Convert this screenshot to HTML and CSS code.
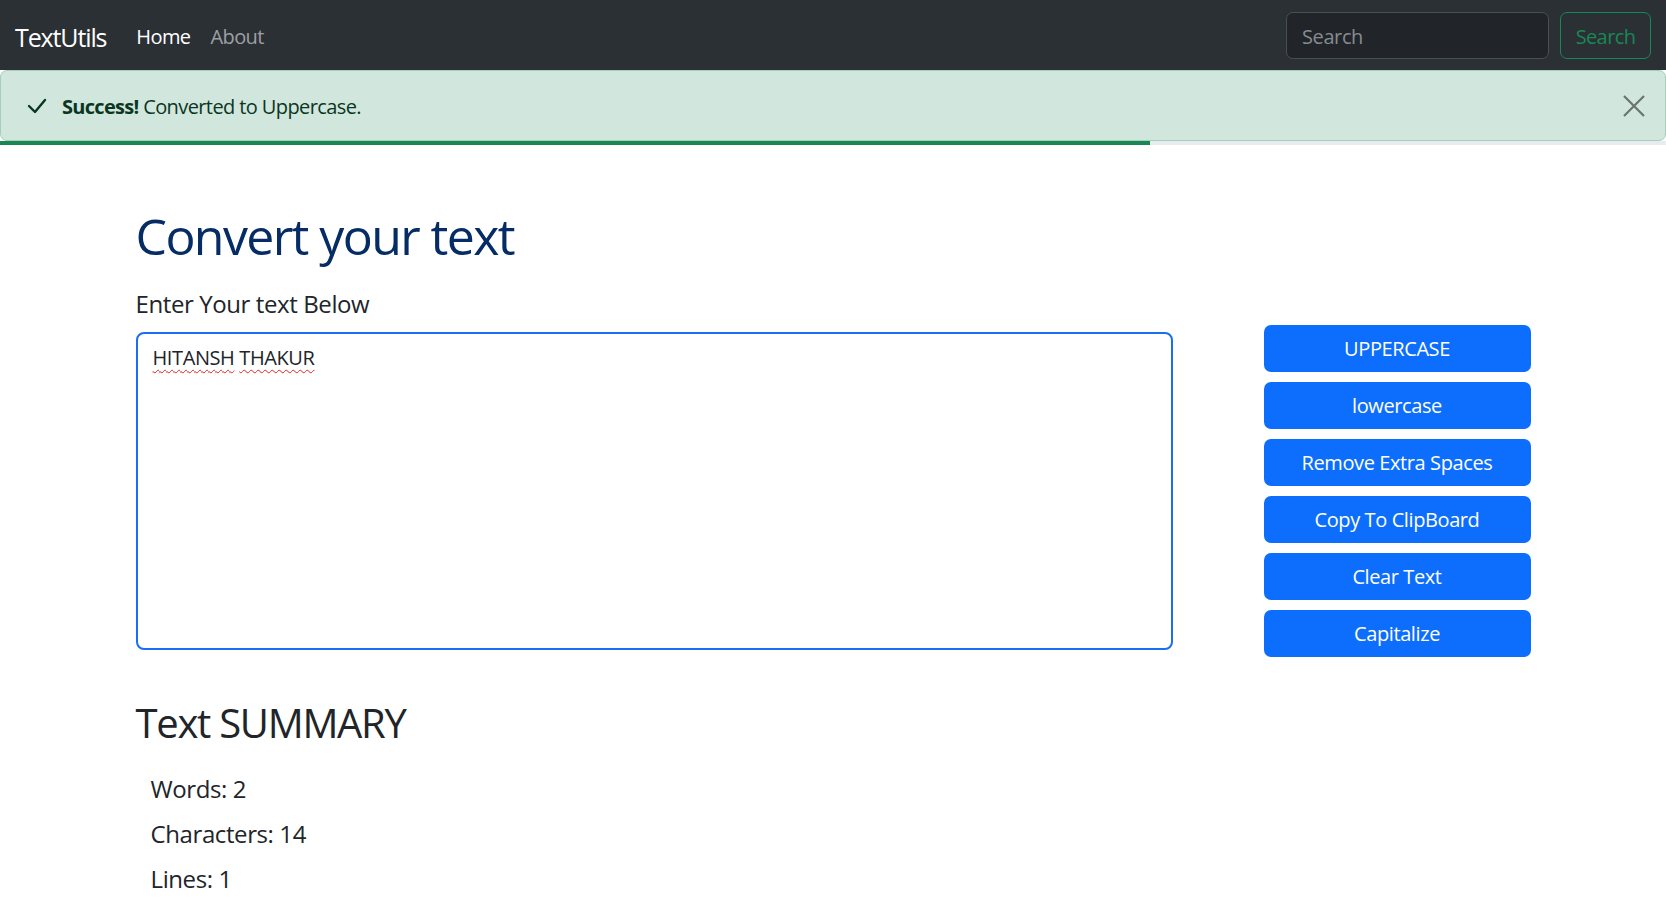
FILE: index.html
```html
<!DOCTYPE html>
<html lang="en">
<head>
<meta charset="utf-8">
<title>TextUtils - Home</title>
<link rel="stylesheet" href="styles.css">
</head>
<body>
<nav class="navbar">
  <a class="brand" href="#">TextUtils</a>
  <ul class="nav-links">
    <li><a class="nav-link active" href="#">Home</a></li>
    <li><a class="nav-link" href="#">About</a></li>
  </ul>
  <form class="search">
    <input class="search-input" type="search" placeholder="Search">
    <button class="search-btn" type="button">Search</button>
  </form>
</nav>

<div class="alert">
  <svg class="alert-icon" width="20" height="16" viewBox="0 0 20 16"><polyline points="2,8 8,14 18,2" fill="none" stroke="#0a3622" stroke-width="2.4" stroke-linecap="round" stroke-linejoin="round"/></svg>
  <span class="alert-text"><strong>Success!</strong> Converted to Uppercase.</span>
  <button class="alert-close" type="button" aria-label="Close">
    <svg width="22" height="22" viewBox="0 0 22 22"><path d="M1 1 L21 21 M21 1 L1 21" stroke="#6a736e" stroke-width="2.2"/></svg>
  </button>
</div>
<div class="progress"><div class="progress-bar" style="width:69%"></div></div>

<main class="container">
  <h1 class="title">Convert your text</h1>
  <div class="editor">
    <div class="editor-main">
      <label class="label">Enter Your text Below</label>
      <div class="textbox" role="textbox"><span class="misspelled">HITANSH</span> <span class="misspelled">THAKUR</span></div>
    </div>
    <div class="actions">
      <button class="btn" type="button">UPPERCASE</button>
      <button class="btn" type="button">lowercase</button>
      <button class="btn" type="button">Remove Extra Spaces</button>
      <button class="btn" type="button">Copy To ClipBoard</button>
      <button class="btn" type="button">Clear Text</button>
      <button class="btn" type="button">Capitalize</button>
    </div>
  </div>

  <h2 class="summary-title">Text SUMMARY</h2>
  <div class="summary">
    <p class="summary-item">Words: 2</p>
    <p class="summary-item">Characters: 14</p>
    <p class="summary-item">Lines: 1</p>
  </div>
</main>
</body>
</html>
```

FILE: styles.css
```css
* { box-sizing: border-box; }

html, body {
  margin: 0;
  padding: 0;
  background: #fff;
}

body {
  font-family: "Open Sans", "Noto Sans", sans-serif;
  font-size: 20px;
  line-height: 1.5;
  color: #212529;
  letter-spacing: -0.02em;
}

/* Navbar */
.navbar {
  height: 70px;
  background: #2b3035;
  display: flex;
  align-items: center;
  padding: 0 15px;
}

.brand {
  font-size: 25px;
  line-height: 37px;
  color: #fff;
  text-decoration: none;
  margin: 4px 20px 0 0;
  letter-spacing: -0.045em;
}

.nav-links {
  list-style: none;
  display: flex;
  margin: 4px 0 0;
  padding: 0;
}

.nav-link {
  display: block;
  padding: 8px 10px;
  color: rgba(255, 255, 255, 0.55);
  text-decoration: none;
  font-size: 20px;
  line-height: 30px;
  letter-spacing: -0.03em;
}

.nav-link.active { color: #fff; }

.search {
  margin-left: auto;
  display: flex;
  gap: 11px;
}

.search-input {
  width: 263px;
  height: 47px;
  background: #212529;
  border: 1px solid #4a4f55;
  border-radius: 7px;
  padding: 3px 15px 0;
  font: inherit;
  font-size: 20px;
  color: #dee2e6;
  letter-spacing: -0.02em;
}

.search-input::placeholder { color: #878b90; }

.search-btn {
  height: 47px;
  width: 91px;
  background: transparent;
  border: 1px solid #198754;
  border-radius: 7px;
  color: #198754;
  font: inherit;
  font-size: 20px;
  letter-spacing: -0.03em;
  padding: 4px 0 0;
}

/* Alert */
.alert {
  height: 71px;
  display: flex;
  align-items: center;
  background: #d1e7dd;
  border: 1px solid #a3cfbb;
  border-radius: 7px;
  color: #0a3622;
  padding: 3px 20px 0 26px;
  letter-spacing: -0.03em;
}

.alert-icon { margin-right: 15px; margin-top: -3px; }

.alert-text strong { font-weight: 700; letter-spacing: -0.035em; }

.alert-close {
  margin-left: auto;
  margin-top: -3px;
  background: none;
  border: 0;
  padding: 0;
  width: 22px;
  height: 22px;
  display: flex;
}

.progress {
  height: 4px;
  background: #e9ecef;
}

.progress-bar {
  height: 100%;
  background: #198754;
}

/* Main */
.container {
  width: 1425px;
  margin: 0 auto;
  padding: 61px 15px 0;
}

.title {
  font-size: 50px;
  line-height: 60px;
  font-weight: 400;
  color: #052c65;
  margin: 0 0 20px;
  letter-spacing: -0.032em;
}

.editor {
  display: grid;
  grid-template-columns: 1037px 1fr;
  align-items: end;
}

.label {
  display: block;
  font-size: 24px;
  line-height: 36px;
  margin-bottom: 10px;
}

.textbox {
  height: 318px;
  border: 2px solid #1b6ef3;
  border-radius: 8px;
  padding: 9px 15px;
  font-size: 20px;
  line-height: 30px;
  color: #212529;
}

.misspelled {
  text-decoration: underline wavy #e0241b;
  text-decoration-thickness: 1px;
  text-underline-offset: 4px;
}

.actions {
  justify-self: end;
  width: 267px;
  display: flex;
  flex-direction: column;
  gap: 10px;
  margin-bottom: -7px;
}

.btn {
  height: 47px;
  background: #0d6efd;
  color: #fff;
  border: 0;
  border-radius: 7px;
  font: inherit;
  font-size: 20px;
  letter-spacing: -0.02em;
  padding-top: 2px;
}

.summary-title {
  font-size: 40px;
  line-height: 48px;
  font-weight: 400;
  margin: 49px 0 19px;
  letter-spacing: -0.032em;
}

.summary { padding-left: 15px; }

.summary-item {
  margin: 0;
  font-size: 24px;
  line-height: 45px;
}
```
